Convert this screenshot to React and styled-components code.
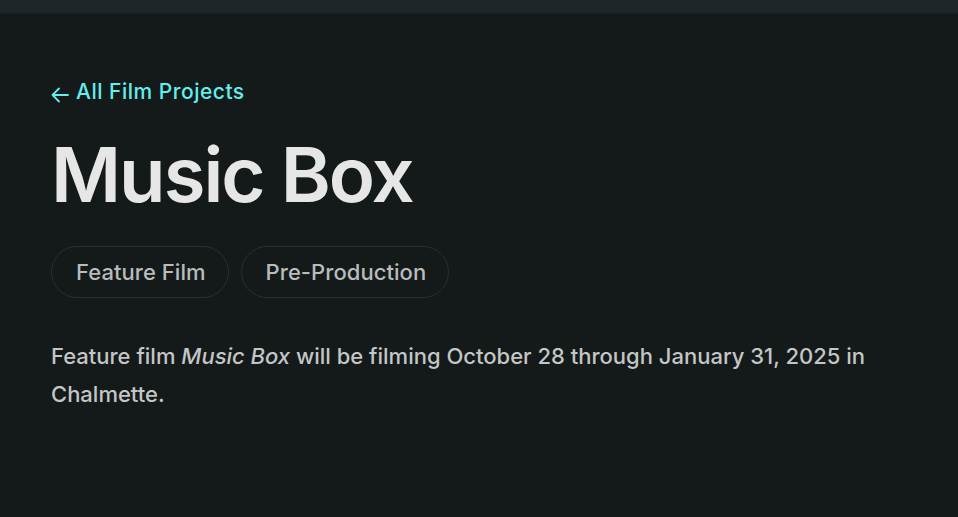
import React from "react";
import styled, { createGlobalStyle } from "styled-components";

const Global = createGlobalStyle`
  html, body { margin: 0; padding: 0; background: #141919; }
  body { font-family: Inter, "Noto Sans", sans-serif; -webkit-font-smoothing: antialiased; }
`;

const Page = styled.div`
  min-height: 517px;
  background: #141919;
  display: flex;
  flex-direction: column;
`;

const TopBar = styled.div`
  height: 13px;
  background: #1f2629;
  border-bottom: 1px solid #1b2123;
`;

const Main = styled.main`
  padding: 65px 51px 0 51px;
  display: flex;
  flex-direction: column;
  align-items: flex-start;
`;

const BackLink = styled.a`
  display: flex;
  align-items: center;
  gap: 7px;
  color: #62eeee;
  font-size: 21px;
  font-weight: 500;
  letter-spacing: 0.5px;
  text-decoration: none;
  line-height: 26px;
  svg { margin-top: 5px; }
`;

const Title = styled.h1`
  margin: 23px 0 0 0;
  font-size: 76px;
  line-height: 92px;
  font-weight: 600;
  letter-spacing: -2px;
  color: #e6e6e6;
`;

const Tags = styled.div`
  display: flex;
  gap: 12px;
  margin-top: 26px;
`;

const Tag = styled.span`
  display: inline-flex;
  align-items: center;
  height: 50px;
  padding: 0 22px 0 24px;
  border: 1px solid #283031;
  border-radius: 26px;
  color: #b9bcbc;
  font-size: 22px;
  font-weight: 500;
  letter-spacing: 0.05px;
`;

const Description = styled.p`
  margin: 39px 0 0 0;
  max-width: 860px;
  font-size: 22px;
  line-height: 38px;
  font-weight: 500;
  letter-spacing: 0;
  color: #c3c6c6;
  em { font-style: italic; }
`;

const Arrow = () => (
  <svg width="18" height="16" viewBox="0 0 18 16" fill="none" stroke="currentColor" strokeWidth="1.8" strokeLinecap="round" strokeLinejoin="round">
    <path d="M17 8H1.5M8 1.5L1.5 8 8 14.5" />
  </svg>
);

export default function App() {
  return (
    <Page>
      <Global />
      <TopBar />
      <Main>
        <BackLink href="#"><Arrow />All Film Projects</BackLink>
        <Title>Music Box</Title>
        <Tags>
          <Tag>Feature Film</Tag>
          <Tag>Pre-Production</Tag>
        </Tags>
        <Description>
          Feature film <em>Music Box</em> will be filming October 28 through January 31, 2025 in Chalmette.
        </Description>
      </Main>
    </Page>
  );
}
